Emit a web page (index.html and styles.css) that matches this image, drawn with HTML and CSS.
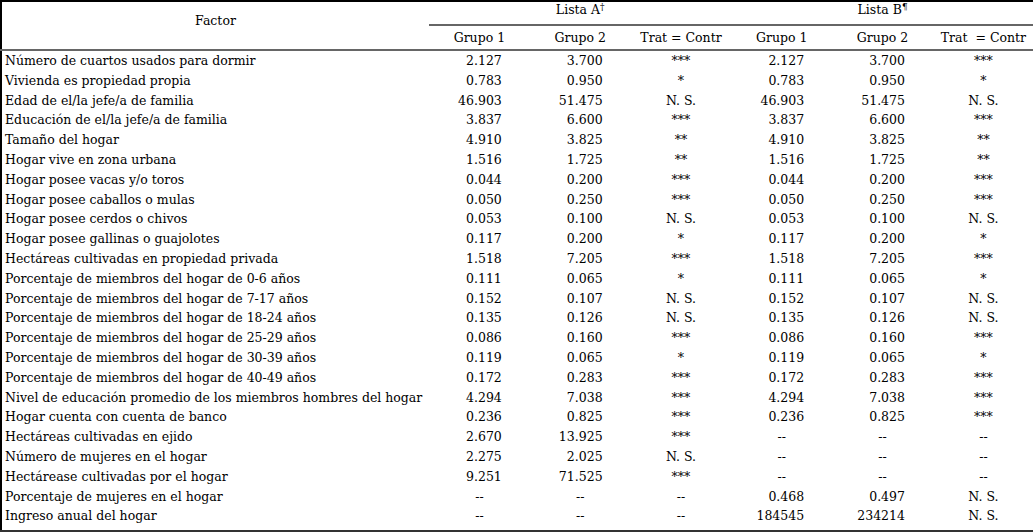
FILE: index.html
```html
<!DOCTYPE html>
<html lang="es">
<head>
<meta charset="utf-8">
<link rel="stylesheet" href="styles.css">
</head>
<body>
<table class="tbl">
  <colgroup>
    <col class="c-factor">
    <col class="c-num"><col class="c-num"><col class="c-num">
    <col class="c-num"><col class="c-num"><col class="c-num">
  </colgroup>
  <thead>
    <tr class="h1">
      <th rowspan="2" class="factor-h">Factor</th>
      <th colspan="3" class="lista">Lista A<sup>†</sup></th>
      <th colspan="3" class="lista">Lista B<sup>¶</sup></th>
    </tr>
    <tr class="h2">
      <th>Grupo 1</th><th>Grupo 2</th><th>Trat = Contr</th>
      <th>Grupo 1</th><th>Grupo 2</th><th>Trat &nbsp;= Contr</th>
    </tr>
  </thead>
  <tbody>
    <tr><td>Número de cuartos usados para dormir</td><td class="n">2.127</td><td class="n">3.700</td><td class="s">***</td><td class="n">2.127</td><td class="n">3.700</td><td class="s">***</td></tr>
    <tr><td>Vivienda es propiedad propia</td><td class="n">0.783</td><td class="n">0.950</td><td class="s">*</td><td class="n">0.783</td><td class="n">0.950</td><td class="s">*</td></tr>
    <tr><td>Edad de el/la jefe/a de familia</td><td class="n">46.903</td><td class="n">51.475</td><td class="s">N. S.</td><td class="n">46.903</td><td class="n">51.475</td><td class="s">N. S.</td></tr>
    <tr><td>Educación de el/la jefe/a de familia</td><td class="n">3.837</td><td class="n">6.600</td><td class="s">***</td><td class="n">3.837</td><td class="n">6.600</td><td class="s">***</td></tr>
    <tr><td>Tamaño del hogar</td><td class="n">4.910</td><td class="n">3.825</td><td class="s">**</td><td class="n">4.910</td><td class="n">3.825</td><td class="s">**</td></tr>
    <tr><td>Hogar vive en zona urbana</td><td class="n">1.516</td><td class="n">1.725</td><td class="s">**</td><td class="n">1.516</td><td class="n">1.725</td><td class="s">**</td></tr>
    <tr><td>Hogar posee vacas y/o toros</td><td class="n">0.044</td><td class="n">0.200</td><td class="s">***</td><td class="n">0.044</td><td class="n">0.200</td><td class="s">***</td></tr>
    <tr><td>Hogar posee caballos o mulas</td><td class="n">0.050</td><td class="n">0.250</td><td class="s">***</td><td class="n">0.050</td><td class="n">0.250</td><td class="s">***</td></tr>
    <tr><td>Hogar posee cerdos o chivos</td><td class="n">0.053</td><td class="n">0.100</td><td class="s">N. S.</td><td class="n">0.053</td><td class="n">0.100</td><td class="s">N. S.</td></tr>
    <tr><td>Hogar posee gallinas o guajolotes</td><td class="n">0.117</td><td class="n">0.200</td><td class="s">*</td><td class="n">0.117</td><td class="n">0.200</td><td class="s">*</td></tr>
    <tr><td>Hectáreas cultivadas en propiedad privada</td><td class="n">1.518</td><td class="n">7.205</td><td class="s">***</td><td class="n">1.518</td><td class="n">7.205</td><td class="s">***</td></tr>
    <tr><td>Porcentaje de miembros del hogar de 0-6 años</td><td class="n">0.111</td><td class="n">0.065</td><td class="s">*</td><td class="n">0.111</td><td class="n">0.065</td><td class="s">*</td></tr>
    <tr><td>Porcentaje de miembros del hogar de 7-17 años</td><td class="n">0.152</td><td class="n">0.107</td><td class="s">N. S.</td><td class="n">0.152</td><td class="n">0.107</td><td class="s">N. S.</td></tr>
    <tr><td>Porcentaje de miembros del hogar de 18-24 años</td><td class="n">0.135</td><td class="n">0.126</td><td class="s">N. S.</td><td class="n">0.135</td><td class="n">0.126</td><td class="s">N. S.</td></tr>
    <tr><td>Porcentaje de miembros del hogar de 25-29 años</td><td class="n">0.086</td><td class="n">0.160</td><td class="s">***</td><td class="n">0.086</td><td class="n">0.160</td><td class="s">***</td></tr>
    <tr><td>Porcentaje de miembros del hogar de 30-39 años</td><td class="n">0.119</td><td class="n">0.065</td><td class="s">*</td><td class="n">0.119</td><td class="n">0.065</td><td class="s">*</td></tr>
    <tr><td>Porcentaje de miembros del hogar de 40-49 años</td><td class="n">0.172</td><td class="n">0.283</td><td class="s">***</td><td class="n">0.172</td><td class="n">0.283</td><td class="s">***</td></tr>
    <tr><td>Nivel de educación promedio de los miembros hombres del hogar</td><td class="n">4.294</td><td class="n">7.038</td><td class="s">***</td><td class="n">4.294</td><td class="n">7.038</td><td class="s">***</td></tr>
    <tr><td>Hogar cuenta con cuenta de banco</td><td class="n">0.236</td><td class="n">0.825</td><td class="s">***</td><td class="n">0.236</td><td class="n">0.825</td><td class="s">***</td></tr>
    <tr><td>Hectáreas cultivadas en ejido</td><td class="n">2.670</td><td class="n">13.925</td><td class="s">***</td><td class="s">--</td><td class="s">--</td><td class="s">--</td></tr>
    <tr><td>Número de mujeres en el hogar</td><td class="n">2.275</td><td class="n">2.025</td><td class="s">N. S.</td><td class="s">--</td><td class="s">--</td><td class="s">--</td></tr>
    <tr><td>Hectárease cultivadas por el hogar</td><td class="n">9.251</td><td class="n">71.525</td><td class="s">***</td><td class="s">--</td><td class="s">--</td><td class="s">--</td></tr>
    <tr><td>Porcentaje de mujeres en el hogar</td><td class="s">--</td><td class="s">--</td><td class="s">--</td><td class="n">0.468</td><td class="n">0.497</td><td class="s">N. S.</td></tr>
    <tr class="last"><td>Ingreso anual del hogar</td><td class="s">--</td><td class="s">--</td><td class="s">--</td><td class="n">184545</td><td class="n">234214</td><td class="s">N. S.</td></tr>
  </tbody>
</table>
</body>
</html>
```

FILE: styles.css
```css
html, body {
  margin: 0;
  padding: 0;
  background: #fff;
}
body {
  font-family: "DejaVu Serif", "Liberation Serif", serif;
  font-size: 12.5px;
  color: #000;
}
.tbl {
  width: 1033px;
  table-layout: fixed;
  border-collapse: collapse;
  border-top: 2px solid #000;
  border-left: 2px solid #000;
  border-bottom: 3px solid #333;
}
.c-factor { width: 428px; }
.c-num { width: 100.8px; }
th, td {
  padding: 0;
  font-weight: normal;
  white-space: nowrap;
}
.h1 th {
  height: 22px;
  vertical-align: top;
  padding-top: 0;
  line-height: 16px;
}
.h2 th {
  height: 23px;
  vertical-align: middle;
  border-bottom: 2px solid #666;
}
.factor-h {
  text-align: center;
  border-bottom: 2px solid #666;
}
.h1 th.factor-h {
  padding-top: 11px;
}
.lista {
  border-bottom: 2px solid #666;
}
sup {
  font-size: 9px;
  vertical-align: 4px;
  line-height: 0;
}
tbody td {
  height: 19.8px;
  line-height: 19.8px;
}
tbody tr.last td {
  padding-bottom: 4px;
}
tbody td:first-child {
  padding-left: 3px;
}
td.n {
  text-align: right;
  padding-right: 28px;
}
td.s {
  text-align: center;
}
```
